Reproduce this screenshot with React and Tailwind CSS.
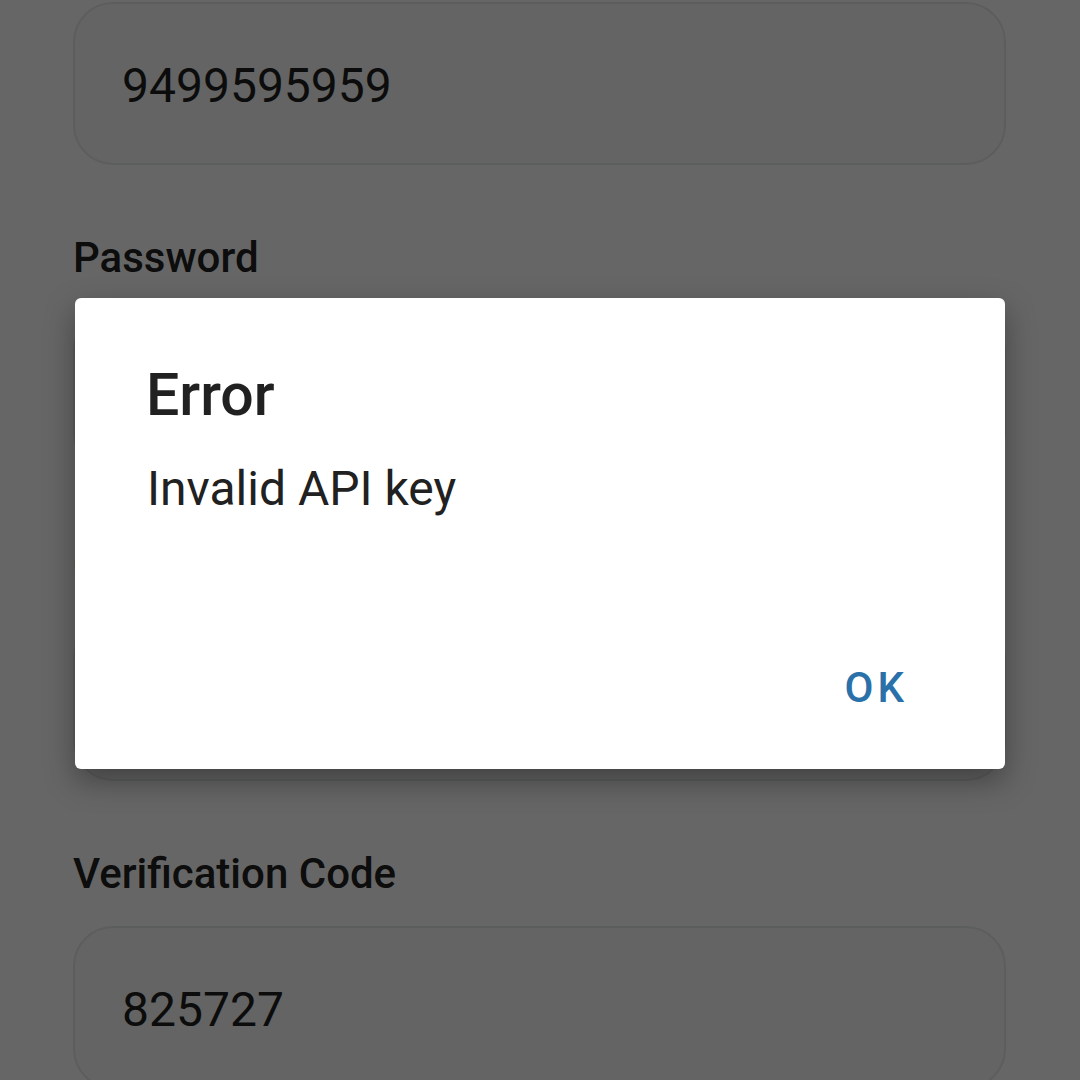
import React from "react";

function Field({ value }) {
  return (
    <div className="h-[163px] rounded-[40px] border-2 border-[#e6ebe8] bg-[#f7fbf8] flex items-center pl-[47px] pt-[4px]">
      <span className="text-[48px] leading-none text-[#1f1f1f]">{value}</span>
    </div>
  );
}

function Label({ children }) {
  return (
    <div className="mt-[72px] mb-[31px] text-[42px] leading-none font-medium text-[#212121]">
      {children}
    </div>
  );
}

export default function App() {
  return (
    <div
      className="relative w-[1080px] h-[1080px] overflow-hidden bg-white"
      style={{ fontFamily: "Roboto, 'Noto Sans', sans-serif" }}
    >
      <div className="pt-[2px] pl-[73px] pr-[74px] flex flex-col">
        <Field value="9499595959" />
        <Label>Password</Label>
        <Field value="" />
        <Label>Confirm Password</Label>
        <Field value="" />
        <Label>Verification Code</Label>
        <Field value="825727" />
      </div>

      <div className="absolute inset-0 bg-black/60" />

      <div className="absolute left-[75px] top-[298px] w-[930px] h-[471px] bg-white rounded-[6px] shadow-[0_12px_30px_rgba(0,0,0,0.35)] flex flex-col pt-[67px] pl-[72px] pr-[97px] pb-[60px]">
        <div className="text-[59px] leading-none font-medium text-[#212121] -ml-[1px]">Error</div>
        <div className="mt-[41px] text-[48px] leading-none text-[#212121]">Invalid API key</div>
        <div className="mt-auto flex justify-end">
          <span className="text-[42px] leading-none font-medium tracking-[4px] text-[#2a71a9]">OK</span>
        </div>
      </div>
    </div>
  );
}
